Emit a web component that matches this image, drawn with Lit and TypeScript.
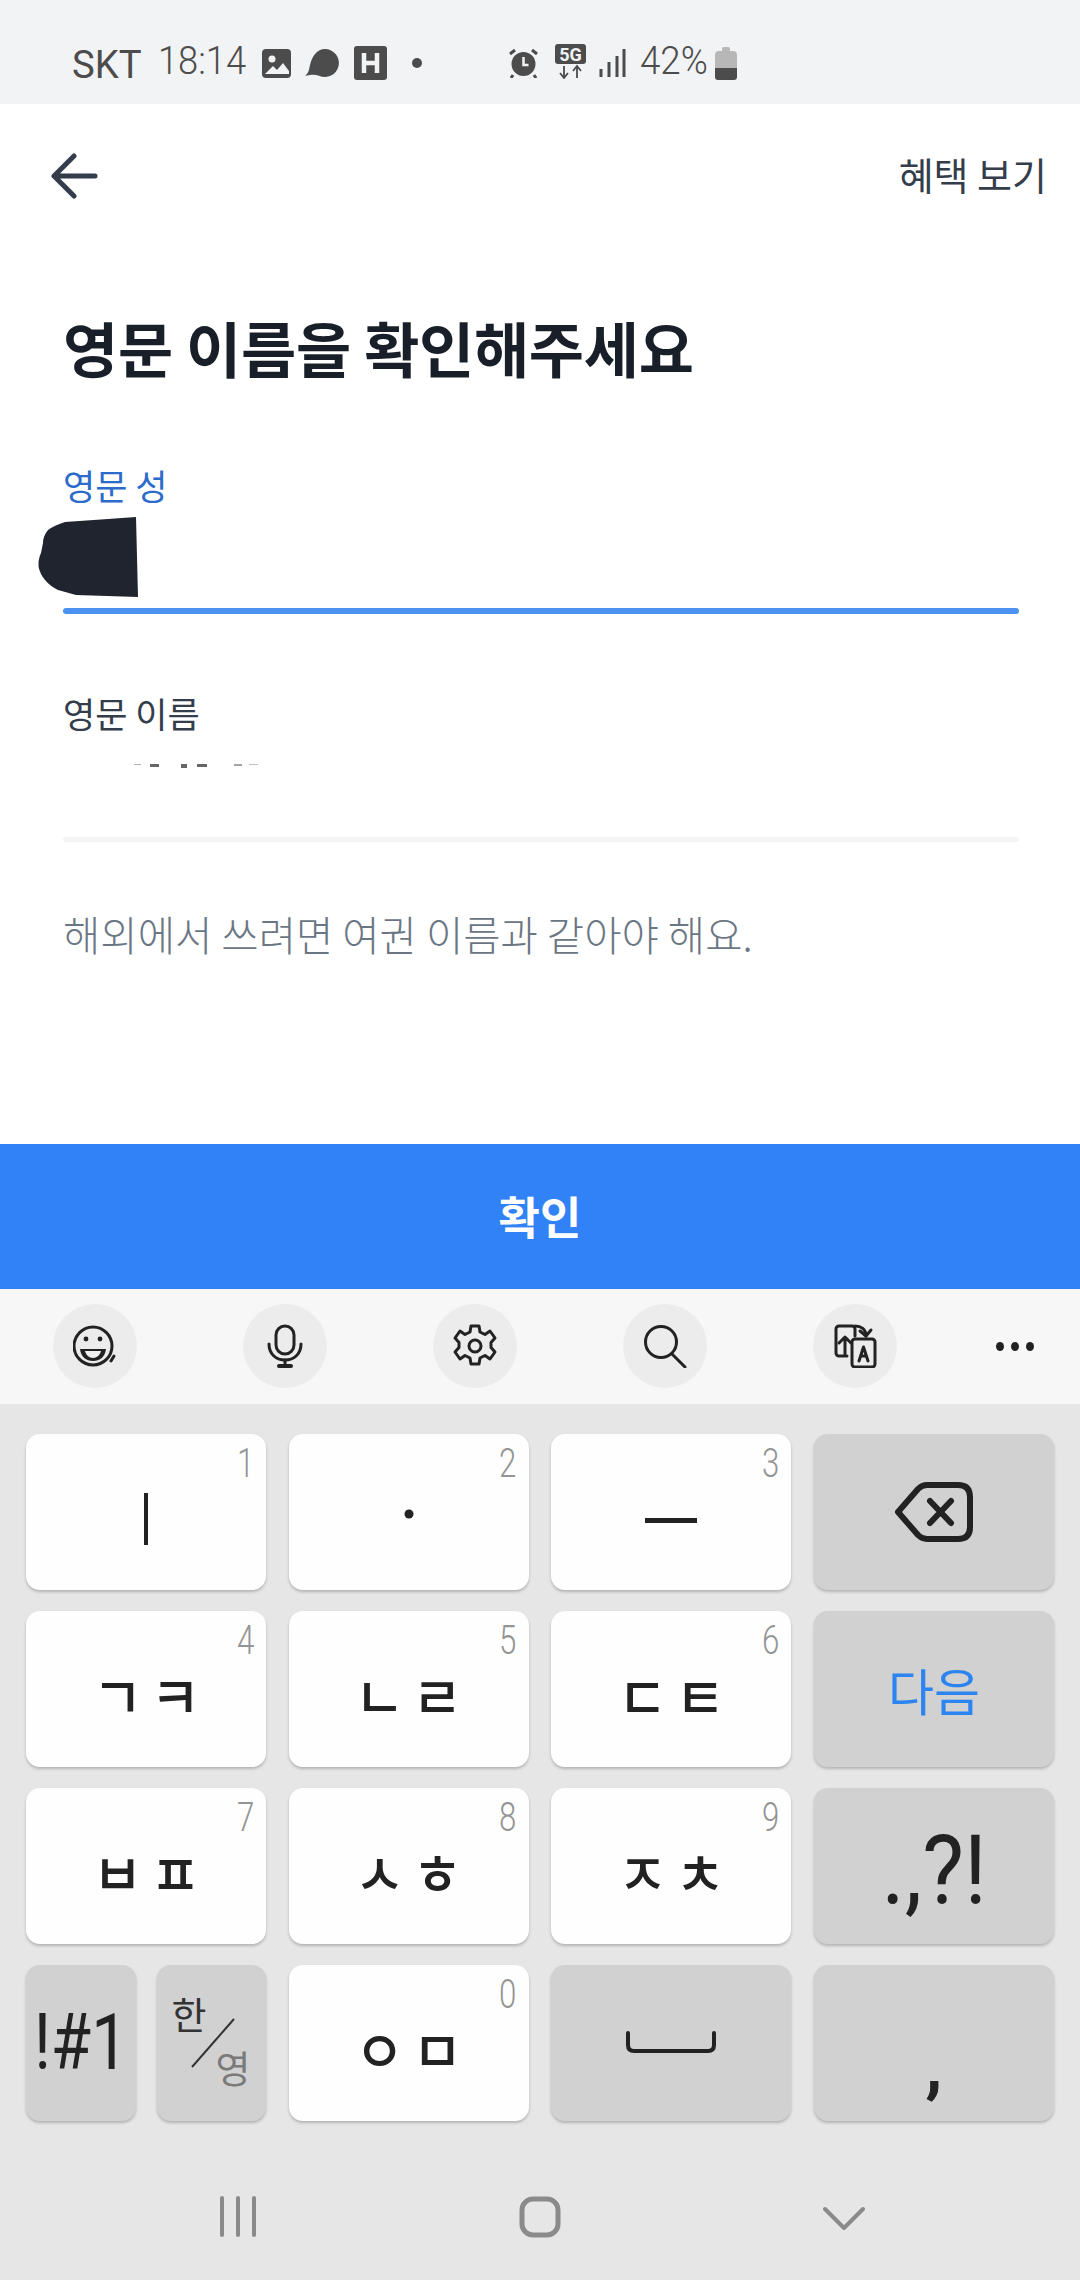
import { LitElement, html, css, svg } from 'lit';
import { customElement } from 'lit/decorators.js';

const FONT = css`"Noto Sans CJK KR", "Noto Sans", sans-serif`;

type KeyDef = { hint: string; glyphs: string[] };

const LETTER_ROWS: KeyDef[] = [
    { hint: '4', glyphs: ['ㄱ', 'ㅋ'] },
    { hint: '5', glyphs: ['ㄴ', 'ㄹ'] },
    { hint: '6', glyphs: ['ㄷ', 'ㅌ'] },
];
const LETTER_ROWS_2: KeyDef[] = [
    { hint: '7', glyphs: ['ㅂ', 'ㅍ'] },
    { hint: '8', glyphs: ['ㅅ', 'ㅎ'] },
    { hint: '9', glyphs: ['ㅈ', 'ㅊ'] },
];

const toolIcons = [
    svg`<circle cx="20" cy="22" r="19"/><path d="M7 25h26c-1 8-6 12-13 12S8 33 7 25z" fill="#222" stroke="none"/><path d="M12 27h16c-1 4-4 7-8 7s-7-3-8-7z" fill="#f0f0f0" stroke="none"/><circle cx="13" cy="15" r="2.4" fill="#222" stroke="none"/><circle cx="27" cy="15" r="2.4" fill="#222" stroke="none"/><path d="M38 37l3-5" />`,
    svg`<rect x="13" y="2" width="18" height="28" rx="9"/><path d="M6 20c0 10 7 16 16 16s16-6 16-16"/><path d="M22 36v5"/><path d="M16 42h12" stroke-width="4"/>`,
    svg`<path d="M18 2h8l1 6 5 2.500 5-3.500 5 7-4 4.500v5l4 4.500-5 7-5-3.500-5 2.500-1 6h-8l-1-6-5-2.500-5 3.500-5-7 4-4.500v-5l-4-4.500 5-7 5 3.500 5-2.500z"/><circle cx="22" cy="22" r="6"/>`,
    svg`<circle cx="18" cy="18" r="15.500"/><path d="M29 30l13 13"/>`,
    svg`<path d="M22 12V5a3 3 0 0 0-3-3H6a3 3 0 0 0-3 3v24a3 3 0 0 0 3 3h8" /><rect x="19" y="15" width="23" height="28" rx="3"/><path d="M12 30V13M6 19l6-6 6 6"/><path d="M26 37l4.500-14 4.500 14M27.500 32h6"/><path d="M27 7l6 5 5-6" /><path d="M22 2c6 0 11 3 11 10"/>`,
];

@customElement('app-root')
export class AppRoot extends LitElement {
    static styles = css`
        :host {
            display: block;
            width: 1080px;
            height: 2280px;
            font-family: ${FONT};
            background: #fff;
        }

        .page {
            display: flex;
            flex-direction: column;
            height: 2280px;
            overflow: hidden;
        }

        /* status bar */
        .status {
            height: 104px;
            flex: none;
            background: #f2f3f5;
            color: #4c4c4c;
            display: flex;
            align-items: flex-start;
            padding: 44px 0 0 72px;
            box-sizing: border-box;
            font-family: Roboto, sans-serif;
            font-weight: 300;
        }

        .status svg {
            display: block;
            flex: none;
        }

        .st-text {
            font-size: 39px;
            line-height: 40px;
            transform-origin: left center;
            white-space: nowrap;
        }

        .carrier {
            width: 86px;
            margin-top: 1px;
            font-weight: 400;
            transform: scaleX(0.98);
        }

        .clock {
            width: 104px;
            margin-top: -3px;
            transform: scaleX(0.93);
        }

        .pct {
            width: 75px;
            margin-top: -3px;
            transform: scaleX(0.94);
        }

        .img-ic { margin: 5px 14px 0 0; }
        .bub-ic { margin: 5px 15px 0 0; }
        .h-ic { margin: 2px 25px 0 0; }
        .dot-ic { margin: 14px 86px 0 0; }
        .alarm-ic { margin: 4px 16px 0 0; }
        .five-ic { margin: 0 13px 0 0; }
        .sig-ic { margin: 4px 14px 0 0; }
        .bat-ic { margin: 3px 0 0 0; }

        /* header */
        .nav {
            height: 143px;
            flex: none;
            display: flex;
            align-items: center;
            justify-content: space-between;
            padding: 0 33px 0 50px;
        }

        .nav svg {
            display: block;
        }

        .benefit {
            font-size: 38px;
            color: #333d4b;
            margin-top: -5px;
        }

        /* form */
        .form {
            flex: 1;
            padding: 0 61px 0 63px;
        }

        h1 {
            margin: 60px 0 0;
            font-size: 60px;
            line-height: 80px;
            font-weight: 700;
            letter-spacing: -0.3px;
            color: #191f28;
        }

        .label {
            font-size: 35px;
            line-height: 50px;
            color: #4e5968;
        }

        .label.active {
            margin-top: 73px;
            color: #2b6ccb;
        }

        .label.idle {
            margin-top: 74px;
            color: #333d4b;
        }

        .value {
            position: relative;
            height: 98px;
        }

        .value.second {
            height: 99px;
        }

        .blob {
            position: absolute;
            left: -25px;
            top: 7px;
        }

        .specks {
            position: absolute;
            left: 0;
            top: 25px;
        }

        .rule {
            height: 6px;
            border-radius: 3px;
            background: #4c92f1;
        }

        .rule.idle {
            height: 5px;
            background: #f2f4f6;
        }

        .helper {
            margin-top: 62px;
            font-size: 40.6px;
            line-height: 60px;
            font-weight: 300;
            color: #6b7684;
            white-space: nowrap;
        }

        .cta {
            flex: none;
            height: 142px;
            padding-bottom: 3px;
            background: #3182f6;
            color: #fff;
            font-size: 45px;
            font-weight: 700;
            display: flex;
            align-items: center;
            justify-content: center;
        }

        /* keyboard toolbar */
        .tools {
            flex: none;
            height: 115px;
            box-sizing: border-box;
            background: #f7f7f7;
            display: grid;
            grid-template-columns: repeat(5, 190px) 130px;
            align-items: center;
        }

        .tool {
            width: 84px;
            height: 84px;
            border-radius: 50%;
            background: #ececec;
            display: flex;
            align-items: center;
            justify-content: center;
            justify-self: center;
            margin-top: -1px;
        }

        .tool svg {
            fill: none;
            stroke: #222;
            stroke-width: 3;
            stroke-linecap: round;
            stroke-linejoin: round;
        }

        .more {
            display: flex;
            gap: 7px;
            justify-self: center;
        }

        .more i {
            width: 8px;
            height: 9px;
            border-radius: 50%;
            background: #222;
        }

        /* keyboard */
        .keys {
            flex: none;
            height: 876px;
            box-sizing: border-box;
            background: #e6e6e6;
            display: flex;
            flex-direction: column;
            padding-top: 30px;
        }

        .grid {
            display: grid;
            grid-template-columns: repeat(4, 240px);
            grid-auto-rows: 156px;
            gap: 21px 22.67px;
            padding: 0 26px;
        }

        .key {
            position: relative;
            border-radius: 14px;
            background: #fefefe;
            box-shadow: 0 2px 3px rgba(0, 0, 0, 0.22);
            color: #222;
            display: flex;
            align-items: center;
            justify-content: center;
            line-height: 1;
        }

        .key.fn {
            background: #d1d1d1;
        }

        .hint {
            position: absolute;
            top: 10px;
            right: 12px;
            font-family: Roboto, sans-serif;
            font-weight: 300;
            font-size: 40px;
            line-height: 40px;
            color: #949494;
            transform: scaleX(0.78);
            transform-origin: right center;
        }

        .jamo {
            display: flex;
            gap: 8px;
            font-size: 58px;
            font-weight: 500;
            margin-top: 10px;
            transform: scaleX(0.94);
        }

        .dash {
            width: 52px;
            height: 5px;
            background: #222;
            margin-top: 16px;
        }

        .next {
            font-size: 50px;
            color: #2b84f0;
            margin-top: 0;
        }

        .sym {
            font-family: Roboto, sans-serif;
            font-weight: 400;
            font-size: 96px;
            transform: scaleX(0.92);
            margin-top: 8px;
        }

        .split {
            display: flex;
            justify-content: space-between;
            gap: 21px;
        }

        .split .key {
            flex: 1 1 0;
            min-width: 0;
        }

        .num {
            font-family: Roboto, sans-serif;
            font-weight: 400;
            font-size: 78px;
            transform: scaleX(0.84);
            white-space: nowrap;
        }

        .han,
        .yeong {
            position: absolute;
            font-size: 38px;
            line-height: 1;
        }

        .han {
            left: 15px;
            top: 29px;
            color: #333;
        }

        .yeong {
            left: 59px;
            top: 83px;
            color: #7a7a7a;
        }

        .slash {
            position: absolute;
            left: 33px;
            top: 53px;
        }

        .comma {
            font-family: Roboto, sans-serif;
            font-weight: 700;
            font-size: 70px;
            margin-top: 44px;
        }

        /* system nav */
        .sysnav {
            flex: 1;
            display: flex;
            align-items: flex-start;
            padding: 75px 0 0 219px;
        }

        .sysnav svg {
            display: block;
            flex: none;
            fill: none;
            stroke: #8a8a8a;
            stroke-linecap: round;
            stroke-linejoin: round;
        }

        .bars { margin-right: 262px; }
        .home { margin-right: 262px; }
        .chev { margin-top: 10px; }
    `;

    private renderStatus() {
        return html`
            <div class="status">
                <span class="st-text carrier">SKT</span>
                <span class="st-text clock">18:14</span>
                <svg class="img-ic" width="29" height="29" viewBox="0 0 29 29">
                    <rect width="29" height="29" rx="4" fill="#4c4c4c"/>
                    <circle cx="10" cy="10" r="3.500" fill="#f2f3f5"/>
                    <path d="M3 25l8-8 4 4 6-7 6 8v3H3z" fill="#f2f3f5"/>
                </svg>
                <svg class="bub-ic" width="34" height="28" viewBox="0 0 34 28">
                    <path d="M20 0a14 14 0 1 1-6 26.700C9 25 4 26 0 27c4-3 4-7 5-11C7 7 12 0 20 0z" fill="#4c4c4c"/>
                </svg>
                <svg class="h-ic" width="33" height="34" viewBox="0 0 33 34">
                    <rect width="33" height="34" rx="3" fill="#4c4c4c"/>
                    <path d="M10 7v20M23 7v20M10 17h13" stroke="#f2f3f5" stroke-width="4.500" fill="none"/>
                </svg>
                <svg class="dot-ic" width="10" height="10" viewBox="0 0 10 10">
                    <circle cx="5" cy="5" r="5" fill="#4c4c4c"/>
                </svg>
                <svg class="alarm-ic" width="31" height="30" viewBox="0 0 31 30">
                    <circle cx="15.500" cy="16" r="12" fill="#4c4c4c"/>
                    <path d="M15.500 9v8h5" stroke="#f2f3f5" stroke-width="2.500" fill="none"/>
                    <path d="M2 6l5-4M29 6l-5-4M5 27l-2 3M26 27l2 3" stroke="#4c4c4c" stroke-width="3" fill="none"/>
                </svg>
                <svg class="five-ic" width="31" height="35" viewBox="0 0 31 35">
                    <rect width="31" height="20" rx="3" fill="#4c4c4c"/>
                    <text x="15.500" y="16.500" text-anchor="middle" font-family="Roboto, sans-serif" font-weight="700" font-size="18" fill="#f2f3f5">5G</text>
                    <path d="M9 22v12M5 29l4 5 4-5M22 34V22M18 27l4-5 4 5" stroke="#4c4c4c" stroke-width="1.800" fill="none"/>
                </svg>
                <svg class="sig-ic" width="27" height="29" viewBox="0 0 27 29">
                    <path d="M2 21v8M10 14v15M18 8v21M25 1v28" stroke="#4c4c4c" stroke-width="3" fill="none"/>
                </svg>
                <span class="st-text pct">42%</span>
                <svg class="bat-ic" width="22" height="33" viewBox="0 0 22 33">
                    <path d="M7 4V2q0-2 2-2h4q2 0 2 2v2h3q4 0 4 4v13H0V8q0-4 4-4z" fill="#b7b7b7"/>
                    <path d="M0 21h22v9q0 3-3 3H3q-3 0-3-3z" fill="#4c4c4c"/>
                </svg>
            </div>
        `;
    }

    private renderKey(k: KeyDef) {
        return html`
            <div class="key">
                <span class="hint">${k.hint}</span>
                <div class="jamo">${k.glyphs.map((g) => html`<span>${g}</span>`)}</div>
            </div>
        `;
    }

    private renderKeyboard() {
        return html`
            <div class="tools">
                ${toolIcons.map(
                    (icon) => html`<div class="tool"><svg width="44" height="44" viewBox="0 0 44 44">${icon}</svg></div>`,
                )}
                <div class="more"><i></i><i></i><i></i></div>
            </div>
            <div class="keys">
                <div class="grid">
                    <div class="key">
                        <span class="hint">1</span>
                        <svg width="6" height="52" viewBox="0 0 6 52" style="margin-top:14px"><rect x="1" width="4" height="52" fill="#222"/></svg>
                    </div>
                    <div class="key">
                        <span class="hint">2</span>
                        <svg width="10" height="10" viewBox="0 0 10 10" style="margin-top:4px"><circle cx="5" cy="5" r="4.500" fill="#222"/></svg>
                    </div>
                    <div class="key">
                        <span class="hint">3</span>
                        <span class="dash"></span>
                    </div>
                    <div class="key fn">
                        <svg width="78" height="60" viewBox="0 0 78 60" fill="none" stroke="#222" stroke-width="6" stroke-linecap="round" stroke-linejoin="round">
                            <path d="M3 30L23 7q4-4 9-4h31q12 0 12 12v30q0 12-12 12H32q-5 0-9-4z"/>
                            <path d="M35 19l21 22M56 19L35 41"/>
                        </svg>
                    </div>

                    ${LETTER_ROWS.map((k) => this.renderKey(k))}
                    <div class="key fn"><span class="next">다음</span></div>

                    ${LETTER_ROWS_2.map((k) => this.renderKey(k))}
                    <div class="key fn"><span class="sym">.,?!</span></div>

                    <div class="split">
                        <div class="key fn"><span class="num">!#1</span></div>
                        <div class="key fn">
                            <span class="han">한</span>
                            <svg class="slash" width="46" height="50" viewBox="0 0 46 50"><path d="M44 1L2 49" stroke="#333" stroke-width="2" fill="none"/></svg>
                            <span class="yeong">영</span>
                        </div>
                    </div>
                    ${this.renderKey({ hint: '0', glyphs: ['ㅇ', 'ㅁ'] })}
                    <div class="key fn">
                        <svg width="90" height="22" viewBox="0 0 90 22" fill="none" stroke="#222" stroke-width="4" stroke-linecap="round" stroke-linejoin="round" style="margin-top:-2px">
                            <path d="M2 2v12q0 6 6 6h74q6 0 6-6V2"/>
                        </svg>
                    </div>
                    <div class="key fn"><span class="comma">,</span></div>
                </div>

                <div class="sysnav">
                    <svg class="bars" width="38" height="41" viewBox="0 0 38 41" stroke-width="4">
                        <path d="M3 2v37M19 2v37M35 2v37"/>
                    </svg>
                    <svg class="home" width="42" height="42" viewBox="0 0 42 42" stroke-width="5">
                        <rect x="3" y="3" width="36" height="36" rx="11"/>
                    </svg>
                    <svg class="chev" width="42" height="24" viewBox="0 0 42 24" stroke-width="4">
                        <path d="M2 3l19 19L40 3"/>
                    </svg>
                </div>
            </div>
        `;
    }

    render() {
        return html`
            <div class="page">
                ${this.renderStatus()}
                <div class="nav">
                    <svg width="48" height="46" viewBox="0 0 48 46" fill="none" stroke="#333d4b" stroke-width="5" stroke-linecap="round" stroke-linejoin="round">
                        <path d="M24 3L4 23l20 20M4 23h41"/>
                    </svg>
                    <span class="benefit">혜택 보기</span>
                </div>
                <div class="form">
                    <h1>영문 이름을 확인해주세요</h1>
                    <div class="label active">영문 성</div>
                    <div class="value">
                        <svg class="blob" width="101" height="81" viewBox="0 0 101 81">
                            <path d="M98 0L70 2L27 5Q17 8 10 13Q5 19 5 26L3 36Q0 42 .6 50Q2 57 7 63Q12 69 20 73L38 78L100 80Z" fill="#20242f"/>
                        </svg>
                    </div>
                    <div class="rule"></div>
                    <div class="label idle">영문 이름</div>
                    <div class="value second">
                        <svg class="specks" width="210" height="6" viewBox="0 0 210 6" fill="#666">
                            <rect x="71" y="1" width="7" height="1" opacity=".5"/>
                            <rect x="87" y="1" width="9" height="3"/>
                            <rect x="118" y="1" width="6" height="4"/>
                            <rect x="134" y="1" width="10" height="3"/>
                            <rect x="171" y="1" width="8" height="2" opacity=".6"/>
                            <rect x="186" y="1" width="9" height="1" opacity=".4"/>
                        </svg>
                    </div>
                    <div class="rule idle"></div>
                    <div class="helper">해외에서 쓰려면 여권 이름과 같아야 해요.</div>
                </div>
                <div class="cta">확인</div>
                ${this.renderKeyboard()}
            </div>
        `;
    }
}
